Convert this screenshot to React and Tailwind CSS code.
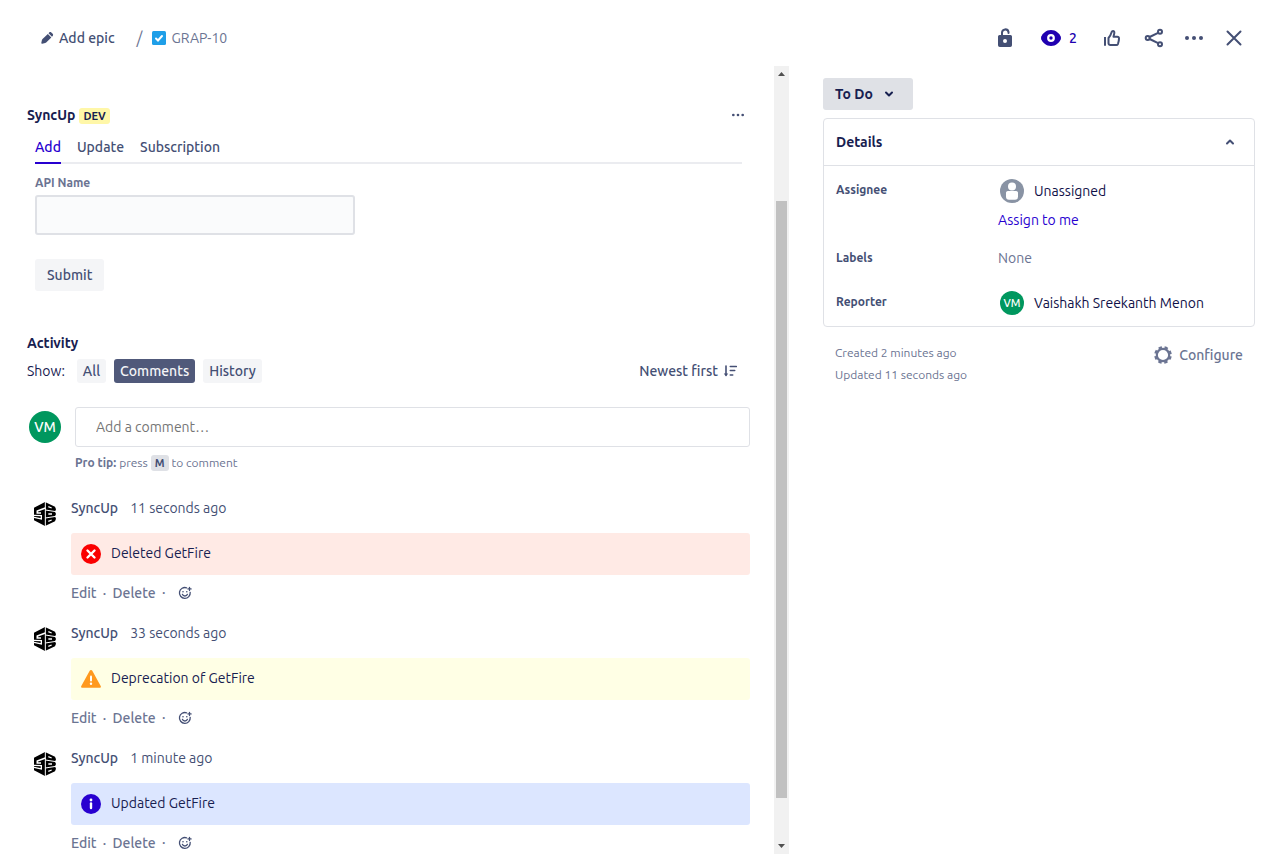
import React, { useState } from "react";

const Icon = ({ size = 24, children, className = "" }) => (
  <svg
    width={size}
    height={size}
    viewBox="0 0 24 24"
    fill="none"
    stroke="currentColor"
    strokeWidth="2"
    strokeLinecap="round"
    strokeLinejoin="round"
    aria-hidden="true"
    className={`shrink-0 ${className}`}
  >
    {children}
  </svg>
);

const PencilIcon = () => (
  <Icon size={16}>
    <g fill="currentColor" stroke="none">
      <path d="M14.300 4.800l5.200 5.200 1-1c.9-.9.9-2.300 0-3.200l-2-2c-.9-.9-2.300-.9-3.200 0z" />
      <path d="M13.300 5.900l5.200 5.200-7.700 7.700c-.4.4-1 .7-1.500.8l-4.500 1c-.9.2-1.500-.4-1.300-1.300l1-4.500c.1-.5.4-1 .8-1.400z" />
    </g>
  </Icon>
);

const TaskIcon = () => (
  <svg width="14" height="14" viewBox="0 0 14 14" aria-hidden="true">
    <rect width="14" height="14" rx="1.500" fill="#1f9fe8" />
    <path d="M4 7.500l2 2L10 5" fill="none" stroke="#fff" strokeWidth="2" strokeLinecap="round" />
  </svg>
);

const UnlockIcon = () => (
  <Icon>
    <path d="M9 10.500V6.500a3.300 3.300 0 0 1 6.500-.6v1" />
    <path
      fill="currentColor"
      stroke="none"
      fillRule="evenodd"
      d="M6.500 9h11A1.500 1.500 0 0 1 19 10.500v8.700a1.800 1.800 0 0 1-1.800 1.800H6.800A1.800 1.800 0 0 1 5 19.200v-8.700A1.500 1.500 0 0 1 6.500 9zM12 13a2 2 0 1 0 0 4 2 2 0 0 0 0-4z"
    />
  </Icon>
);

const WatchIcon = () => (
  <Icon>
    <path
      d="M12 4c5 0 8.500 3.700 9.700 6.500.4 1 .4 2 0 3C20.500 16.300 17 20 12 20s-8.500-3.700-9.700-6.500c-.4-1-.4-2 0-3C3.500 7.700 7 4 12 4z"
      fill="currentColor"
      stroke="none"
    />
    <circle cx="12" cy="12" r="2.800" stroke="#fff" strokeWidth="2.200" />
  </Icon>
);

const LikeIcon = () => (
  <Icon>
    <path d="M5 11v8.800" strokeLinecap="butt" />
    <path d="M8.500 12v5.300a1.800 1.800 0 0 0 1.800 1.800h5.900c.9 0 1.500-.5 1.800-1.300.5-1.500.9-3.100 1-5.200.1-1.200-.6-1.900-1.700-1.900h-3.800l.8-3.600c.2-1.200-.3-2-1.300-2-.7 0-1.100.3-1.400 1.100-.6 2-1.500 4-3.100 5.800z" />
  </Icon>
);

const ShareIcon = () => (
  <Icon>
    <circle cx="5.700" cy="12" r="2" />
    <circle cx="18" cy="5.800" r="2" />
    <circle cx="18" cy="18.200" r="2" />
    <path d="M7.600 11l8.500-4.200M7.600 13l8.500 4.200" />
  </Icon>
);

const MoreIcon = ({ size = 24 }) => (
  <Icon size={size}>
    <g fill="currentColor" stroke="none">
      <circle cx="5" cy="12" r="2" />
      <circle cx="12" cy="12" r="2" />
      <circle cx="19" cy="12" r="2" />
    </g>
  </Icon>
);

const CloseIcon = () => (
  <Icon>
    <path d="M5.500 5.500l13 13M18.500 5.500l-13 13" />
  </Icon>
);

const SortIcon = () => (
  <svg width="14" height="14" viewBox="0 0 14 14" fill="none" stroke="currentColor" strokeWidth="1.600" strokeLinecap="round" aria-hidden="true">
    <path d="M3 2v9" />
    <path d="M.8 9.500h4.400L3 12.500z" fill="currentColor" stroke="none" />
    <path d="M7.300 2.500h6M7.300 6.500h4.400M7.300 11h2.400" />
  </svg>
);

const GearIcon = () => (
  <svg width="20" height="20" viewBox="0 0 20 20" fill="none" stroke="currentColor" aria-hidden="true">
    <circle cx="10" cy="10" r="6.200" strokeWidth="2.200" />
    <circle cx="10" cy="10" r="7.700" strokeWidth="2.200" strokeDasharray="3.400 2.650" strokeDashoffset="-1.300" />
  </svg>
);

const EmojiIcon = () => (
  <svg width="16" height="16" viewBox="0 0 16 16" fill="none" stroke="currentColor" strokeWidth="1.300" strokeLinecap="round" aria-hidden="true">
    <path d="M9.600 2.800A5.400 5.400 0 1 0 13.200 7.300" />
    <path d="M5.400 9.300c.4 1.100 1.400 1.700 2.500 1.700s2.100-.6 2.500-1.700" />
    <path d="M12.500 2.300v3.200M10.900 3.900h3.200" />
    <circle cx="6" cy="6.700" r=".8" fill="currentColor" stroke="none" />
    <circle cx="9.800" cy="6.700" r=".8" fill="currentColor" stroke="none" />
  </svg>
);

const SyncUpLogo = () => (
  <svg width="22" height="24" viewBox="0 0 66 72" aria-hidden="true" className="shrink-0">
    <path d="M33 0l30 14 3 8-3 7 3 7-3 7 3 7-3 8-30 14L0 55V17z" fill="#000" />
    <g fill="none" stroke="#fff">
      <path d="M34 0v72" strokeWidth="3" />
      <path d="M34 18L10 27v6h11" strokeWidth="5" />
      <path d="M0 40l22 1v10L0 46" strokeWidth="4" />
      <path d="M34 24l32 5M34 48l32-5" strokeWidth="3" />
      <path d="M43 14l10 4M43 36h11M43 58l10-4" strokeWidth="4" />
    </g>
  </svg>
);

const StatusIcon = ({ type }) => (
  <svg width="20" height="20" viewBox="0 0 20 20" aria-hidden="true" className="shrink-0">
    {type === "error" && (
      <>
        <circle cx="10" cy="10" r="10" fill="#fa0000" />
        <path d="M6.500 6.500l7 7M13.500 6.500l-7 7" stroke="#fff" strokeWidth="2.400" strokeLinecap="round" />
      </>
    )}
    {type === "warning" && (
      <>
        <path d="M8.700 1.800a1.500 1.500 0 0 1 2.600 0l8.400 15.200c.5.900 0 1.800-1 1.800H1.300c-1 0-1.500-.9-1-1.800z" fill="#ff991f" />
        <path d="M10 7.500v4" stroke="#fff" strokeWidth="2" strokeLinecap="round" />
        <circle cx="10" cy="14.800" r="1.200" fill="#fff" />
      </>
    )}
    {type === "info" && (
      <>
        <circle cx="10" cy="10" r="10" fill="#2800d0" />
        <circle cx="10" cy="6" r="1.400" fill="#fff" />
        <path d="M10 9.500v4.500" stroke="#fff" strokeWidth="2.400" strokeLinecap="round" />
      </>
    )}
  </svg>
);

const panelColors = {
  error: "bg-[#ffeae5]",
  warning: "bg-[#ffffe5]",
  info: "bg-[#dce6ff]",
};

const comments = [
  { id: 1, time: "11 seconds ago", type: "error", text: "Deleted GetFire" },
  { id: 2, time: "33 seconds ago", type: "warning", text: "Deprecation of GetFire" },
  { id: 3, time: "1 minute ago", type: "info", text: "Updated GetFire" },
];

const Comment = ({ time, type, text }) => (
  <li className="flex">
    <div className="w-11 pl-[7px] pt-1">
      <SyncUpLogo />
    </div>
    <div className="flex-1">
      <div className="flex gap-3 text-[#444f74]">
        <span className="font-medium">SyncUp</span>
        <span>{time}</span>
      </div>
      <div className={`mt-[15px] flex h-[42px] items-center gap-2.5 rounded-[3px] px-2.5 ${panelColors[type]}`}>
        <StatusIcon type={type} />
        <p className="pb-0.5">{text}</p>
      </div>
      <div className="mt-2 flex h-5 items-center font-medium text-[#6b7492]">
        <button type="button">Edit</button>
        <span className="w-4 text-center">·</span>
        <button type="button">Delete</button>
        <span className="w-4 pb-0.5 text-center">·</span>
        <button type="button" aria-label="Add reaction" className="ml-[5px] text-[#444f74]">
          <EmojiIcon />
        </button>
      </div>
    </div>
  </li>
);

const Scrollbar = () => (
  <div aria-hidden="true" className="flex w-[15px] shrink-0 flex-col items-center bg-[#f1f1f1]">
    <svg width="15" height="15" viewBox="0 0 15 15" className="shrink-0">
      <path d="M4 10h7L7.500 6z" fill="#505050" />
    </svg>
    <div className="flex-[120]" />
    <div className="w-[11px] flex-[597] bg-[#c1c1c1]" />
    <div className="flex-[41]" />
    <svg width="15" height="15" viewBox="0 0 15 15" className="shrink-0">
      <path d="M4 5h7L7.500 9z" fill="#505050" />
    </svg>
  </div>
);

const TABS = ["Add", "Update", "Subscription"];
const FILTERS = ["All", "Comments", "History"];

const App = () => {
  const [tab, setTab] = useState("Add");
  const [filter, setFilter] = useState("Comments");

  return (
    <div className="flex h-screen flex-col overflow-hidden bg-white font-['Ubuntu','Noto_Sans',sans-serif] text-sm leading-5 text-[#172050]">
      <header className="flex h-[66px] shrink-0 items-center justify-between pt-2.5 pr-[22px] pl-[39px] text-[#444f74]">
        <nav className="flex items-center">
          <button type="button" className="flex items-center gap-1 font-medium">
            <PencilIcon />
            Add epic
          </button>
          <span className="mr-2.5 ml-[22px] text-base text-[#6b7492]">/</span>
          <a href="#issue" className="flex items-center gap-[5px] text-[#6b7492]">
            <TaskIcon />
            GRAP-10
          </a>
        </nav>
        <div className="flex items-center gap-4">
          <button type="button" aria-label="Unlock" className="mr-1.5">
            <UnlockIcon />
          </button>
          <button type="button" aria-label="Watchers" className="mr-[7px] flex items-center gap-1.5 font-medium text-[#2000b0]">
            <WatchIcon />
            2
          </button>
          <button type="button" aria-label="Vote">
            <LikeIcon />
          </button>
          <button type="button" aria-label="Share" className="ml-0.5">
            <ShareIcon />
          </button>
          <button type="button" aria-label="Actions">
            <MoreIcon />
          </button>
          <button type="button" aria-label="Close">
            <CloseIcon />
          </button>
        </div>
      </header>

      <div className="flex min-h-0 flex-1">
        <main className="min-w-0 flex-1 overflow-hidden pt-[37px] pr-6 pl-[27px]">
          <div className="flex h-6 items-center justify-between pr-1">
            <h2 className="flex items-center gap-1 font-semibold">
              SyncUp
              <span className="mt-0.5 rounded-[3px] bg-[#fff7a8] px-1 text-[11px] leading-4 font-bold">DEV</span>
            </h2>
            <button type="button" aria-label="More options" className="text-[#444f74]">
              <MoreIcon size={16} />
            </button>
          </div>

          <div className="px-2">
            <div role="tablist" className="mt-1 flex h-[33px] gap-4 border-b-2 border-[#ebecf0] font-medium text-[#444f74]">
              {TABS.map((t) => (
                <button
                  key={t}
                  type="button"
                  role="tab"
                  aria-selected={tab === t}
                  onClick={() => setTab(t)}
                  className={`-mb-0.5 border-b-2 ${tab === t ? "border-[#2800d0] text-[#2800d0]" : "border-transparent"}`}
                >
                  {t}
                </button>
              ))}
            </div>

            <form onSubmit={(e) => e.preventDefault()} className="flex flex-col items-start">
              <label htmlFor="api-name" className="mt-[11px] text-xs font-semibold text-[#6b7492]">
                API Name
              </label>
              <input
                id="api-name"
                type="text"
                className="mt-1 h-10 w-80 rounded-[3px] border-2 border-[#dfe1e6] bg-[#fafbfc] px-2"
              />
              <button type="submit" className="mt-6 h-8 rounded-[3px] bg-[#f4f5f7] px-3 font-medium text-[#444f74]">
                Submit
              </button>
            </form>
          </div>

          <h2 className="mt-[42px] font-semibold">Activity</h2>
          <div className="mt-1.5 flex h-6 items-center justify-between pr-[13px]">
            <div className="flex items-center gap-2">
              <span className="mr-1">Show:</span>
              {FILTERS.map((f) => (
                <button
                  key={f}
                  type="button"
                  onClick={() => setFilter(f)}
                  className={`h-6 rounded-[3px] px-1.5 font-medium ${filter === f ? "bg-[#50597a] text-[#f4f5f7]" : "bg-[#f4f5f7] text-[#444f74]"}`}
                >
                  {f}
                </button>
              ))}
            </div>
            <button type="button" className="flex items-center gap-[5px] font-medium text-[#444f74]">
              Newest first
              <SortIcon />
            </button>
          </div>

          <div className="mt-6 flex items-center pl-0.5">
            <span className="mr-3.5 flex h-8 w-8 items-center justify-center rounded-full bg-[#00975e] font-medium text-white">
              VM
            </span>
            <input
              type="text"
              aria-label="Add a comment"
              placeholder="Add a comment…"
              className="h-10 flex-1 rounded-[3px] border border-[#dfe1e6] px-5 placeholder:text-[#757575]"
            />
          </div>
          <p className="mt-2 flex h-4 items-center gap-[3px] pl-12 text-xs text-[#6b7492]">
            <span className="font-semibold">Pro tip:</span> press
            <kbd className="rounded-[3px] bg-[#dfe1e6] px-1 font-['Ubuntu','Noto_Sans',sans-serif] text-[11px] leading-4 font-bold text-[#444f74]">M</kbd>
            to comment
          </p>

          <ul className="mt-[27px] flex flex-col gap-5">
            {comments.map((c) => (
              <Comment key={c.id} {...c} />
            ))}
          </ul>
        </main>

        <Scrollbar />

        <aside className="w-[479px] shrink-0 pt-3 pr-[13px] pl-[34px]">
          <button type="button" className="flex h-8 w-[90px] items-center gap-2.5 rounded-[3px] bg-[#dfe1e6] px-3 font-semibold">
            To Do
            <Icon size={12}>
              <path d="M6 9l6 6 6-6" strokeWidth="4" />
            </Icon>
          </button>

          <section className="mt-2 rounded-[4px] border border-[#dfe1e6] pb-[11px]">
            <button type="button" className="flex h-[47px] w-full items-center justify-between border-b border-[#dfe1e6] pr-[18px] pl-3 font-semibold">
              Details
              <Icon size={12} className="text-[#444f74]">
                <path d="M6 15l6-6 6 6" strokeWidth="4" />
              </Icon>
            </button>
            <dl className="grid grid-cols-[162px_1fr] px-3 pt-[13px]">
              <dt className="pt-[3px] text-xs font-semibold text-[#444f74]">Assignee</dt>
              <dd>
                <div className="flex h-6 items-center gap-2.5 pl-0.5 text-[#0f1048]">
                  <svg width="24" height="24" viewBox="0 0 24 24" aria-hidden="true">
                    <circle cx="12" cy="12" r="12" fill="#8993a4" />
                    <circle cx="12" cy="7.500" r="4" fill="#fff" />
                    <path d="M6 13.500a1.800 1.800 0 0 1 1.800-1.500h8.400a1.800 1.800 0 0 1 1.800 1.500v4.300a3 3 0 0 1-3 3H9a3 3 0 0 1-3-3z" fill="#fff" />
                  </svg>
                  Unassigned
                </div>
                <button type="button" className="mt-[7px] text-[#2800d0]">
                  Assign to me
                </button>
              </dd>
              <dt className="mt-5 text-xs font-semibold text-[#444f74]">Labels</dt>
              <dd className="mt-[18px] text-[#6b7492]">None</dd>
              <dt className="mt-[26px] text-xs font-semibold text-[#444f74]">Reporter</dt>
              <dd className="mt-[23px] flex h-6 items-center gap-2.5 pl-0.5 text-[#0f1048]">
                <span className="flex h-6 w-6 items-center justify-center rounded-full bg-[#00975e] text-[11px] font-medium text-white">VM</span>
                Vaishakh Sreekanth Menon
              </dd>
            </dl>
          </section>

          <div className="flex items-start justify-between px-3 pt-[15px] text-[#6b7492]">
            <div className="text-xs leading-[22px]">
              <p>Created 2 minutes ago</p>
              <p>Updated 11 seconds ago</p>
            </div>
            <button type="button" className="mt-[3px] flex items-center gap-1.5 font-medium">
              <GearIcon />
              Configure
            </button>
          </div>
        </aside>
      </div>
    </div>
  );
};

export default App;
